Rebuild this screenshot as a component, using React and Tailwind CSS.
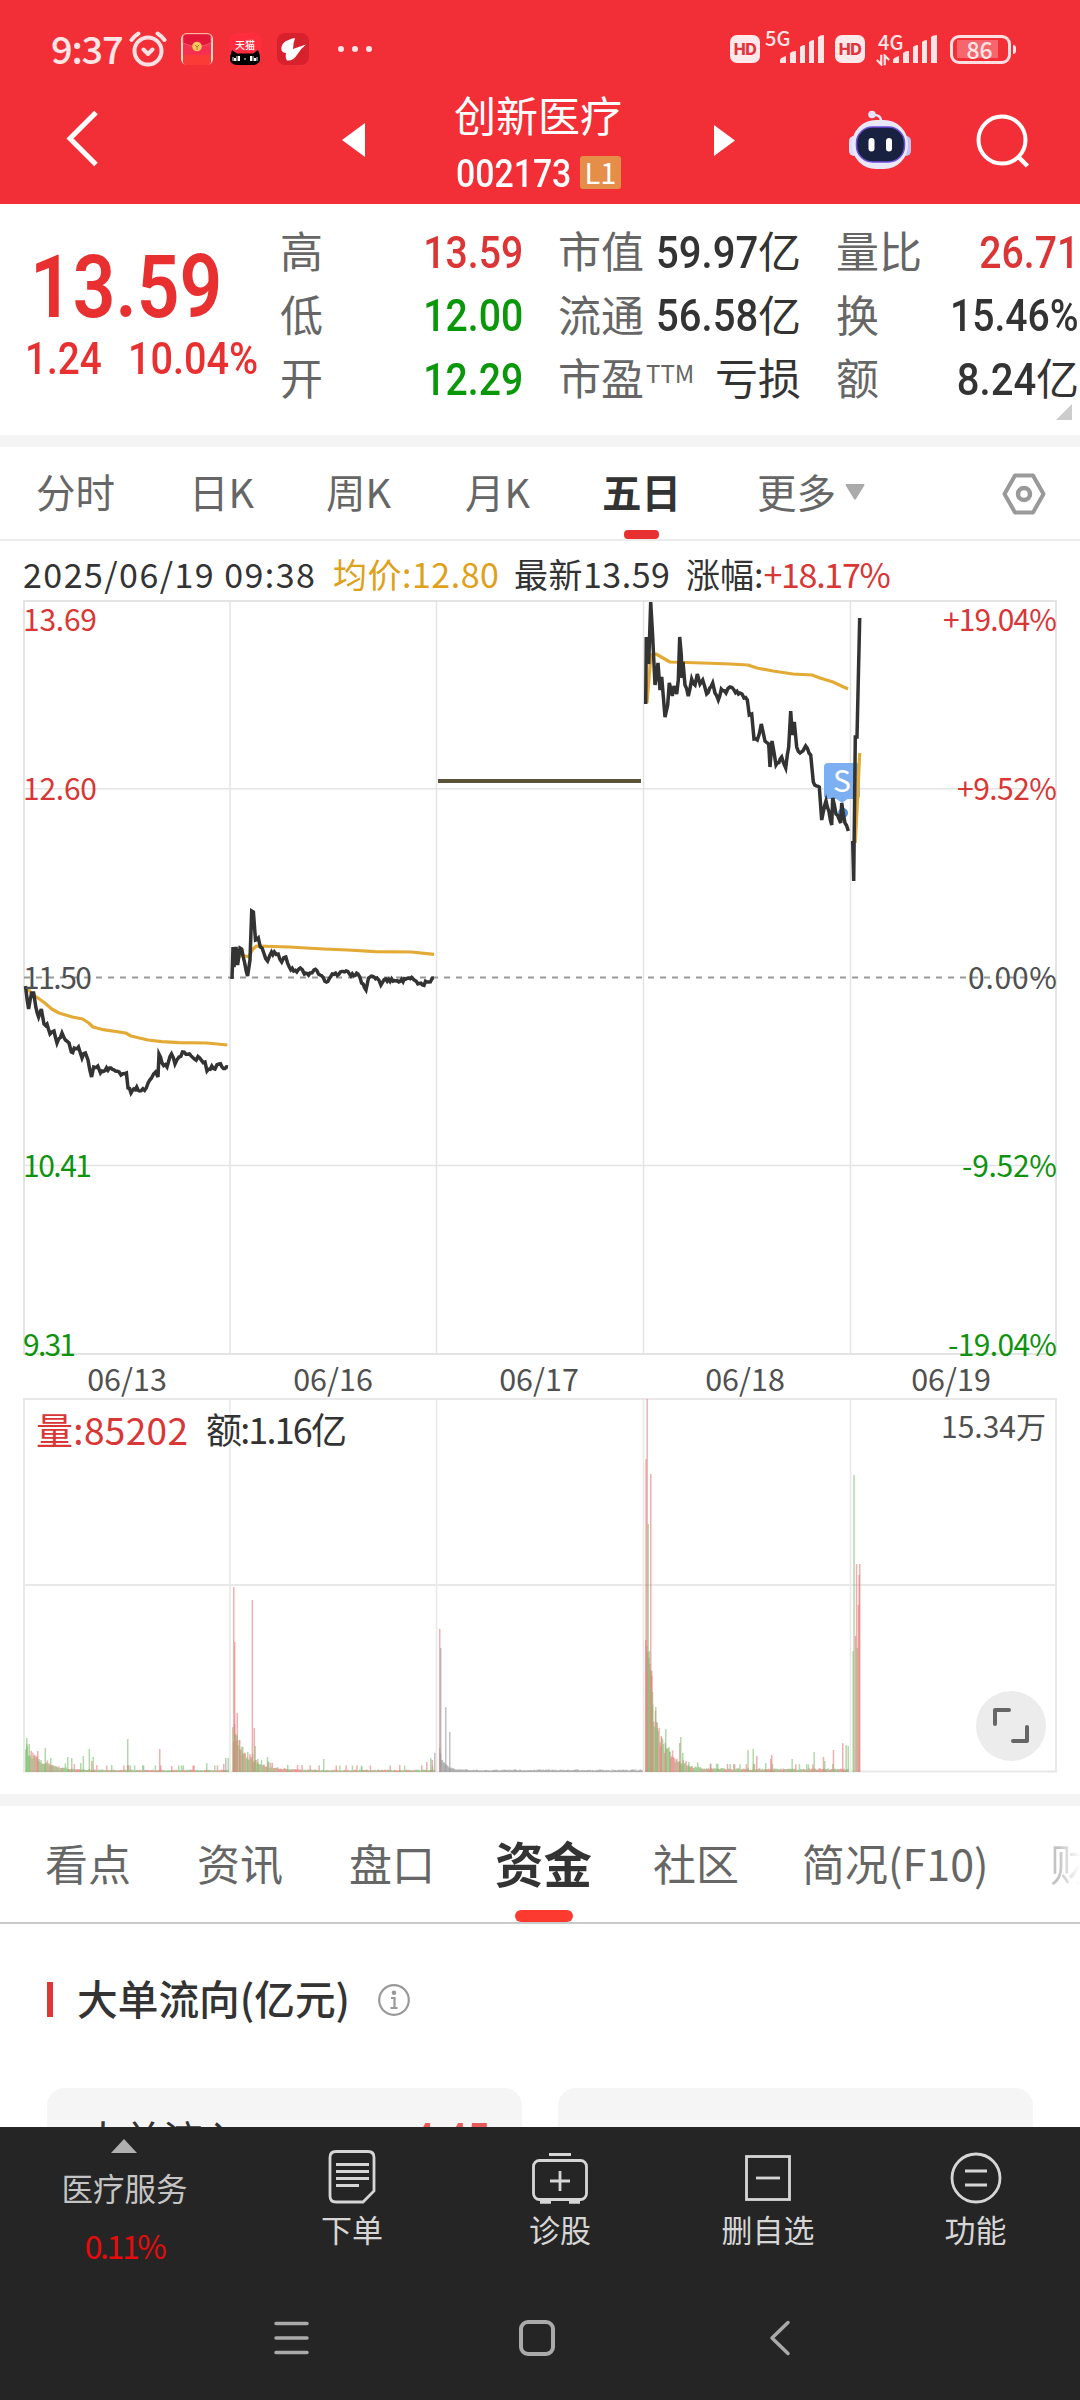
import React, { useState } from 'react';

const ROJO = '#d93636';
const VERDE = '#0f930f';

const cotizacion = [
  [
    { label: '高', value: '13.59', color: 'text-[#dc3535]' },
    { label: '低', value: '12.00', color: 'text-[#0a970a]' },
    { label: '开', value: '12.29', color: 'text-[#0a970a]' },
  ],
  [
    { label: '市值', value: '59.97', unit: '亿', color: 'text-[#333]' },
    { label: '流通', value: '56.58', unit: '亿', color: 'text-[#333]' },
    { label: '市盈', sup: 'TTM', unit: '亏损', color: 'text-[#333]' },
  ],
  [
    { label: '量比', value: '26.71', color: 'text-[#dc3535]' },
    { label: '换', value: '15.46%', color: 'text-[#333]' },
    { label: '额', value: '8.24', unit: '亿', color: 'text-[#333]' },
  ],
];

const periodos = [
  { id: '分时', cls: 'ml-[36px] w-[153px]' },
  { id: '日K', cls: 'w-[137px]' },
  { id: '周K', cls: 'w-[139px]' },
  { id: '月K', cls: 'w-[137px]' },
  { id: '五日', cls: 'w-[155px]' },
];

const secciones = [
  { id: '看点', cls: 'ml-[45px] w-[152px]' },
  { id: '资讯', cls: 'w-[152px]' },
  { id: '盘口', cls: 'w-[146px]' },
  { id: '资金', cls: 'w-[158px]' },
  { id: '社区', cls: 'w-[149px]' },
  { id: '简况(F10)', cls: 'w-[248px]' },
];

const precios = [
  '25.5,986 28.6,1009 31.7,993 33.7,993 35.8,1007 38.6,1017 41.3,1009 44,1024 47,1024 50,1034 54,1031 57,1043 62,1033 65.4,1040 69,1043 71.3,1052 78.5,1047 82,1058 85.4,1053 88,1060 91.6,1077 93.7,1067 97.8,1066 100.5,1073 109.5,1068 115.4,1071 121,1075 126.4,1073 128,1088 131,1093 136.7,1087 139.5,1091 146.3,1088 151.5,1078 155.6,1072 158,1077 159,1054 162,1063 167,1067 171.5,1054 175,1064 179,1057 182.5,1052 189.4,1054 194.5,1059 199.7,1058 205,1062 207,1071 211.8,1066 215,1069 219,1064 222,1067 228,1067',
  '232,979 233,947 234,967 236,947 237.6,965 240,948 241.7,949 244.5,962 247.6,976 250,960 251.7,911 253.4,912 255.5,940 258.3,938 260.3,947 263.8,953 267.6,961 270,955 274.4,952 278.2,954 281.7,962 285.8,957 289.3,967 293.7,971 296.8,972 300.3,968 304.4,974 310,973 314,970 320,975 326.4,982 332.3,974 339,974 346,971 349.5,974 358,974 361.6,983 366,990 368.5,978 377,978 380.9,985 385.7,979 396,981 413,979 422.5,985 427,982 433.9,978',
  '645.7,704 646.3,637 648.7,664 650.7,602 652.7,637 655,685 658,663 660,690 661.7,677 665,717 667.7,705 669.3,683 672.3,696 674,686 676.7,694 678.3,680 679.7,637 681.3,655 682,678 683,662 685,685 688.3,696 691.7,679 695,685 697.3,674 700,684 702.7,680 706.7,694 712.7,683 715,693 718.3,700 721.3,689 726,693 730,687 734,690 740,693 744,698 747.3,700 749.3,715 751.7,714 754,739 757.3,740 761.3,724 765,741 768.7,744 770,767 772,741 776,765 781.7,757 785.7,768 788.7,747 790.7,711 792.3,735 794.3,722 796.7,747 800,753 805.7,746 810.7,755 813.3,782 819.3,787 821.7,820 826,801 831.7,825 832.7,798 836,814 840.7,823 841.7,803 845,823 848.3,831',
];

const medias = [
  '27.5,988 31.7,994 38,998 44.8,1003 51.7,1009 59,1013 72.3,1017 82.6,1019 88.8,1023 93,1027 103.3,1029.7 125.7,1033 130.9,1036 148,1040 161.8,1041.7 179,1042.7 206.6,1043 227.3,1045',
  '232,965 241,955 248.6,956.7 253,949 256.5,946 289,947 323.7,949 347.8,950 375.3,951.7 411.5,952 434,954.3',
  '647,703 649,678 651,655 656,654 663,658 670,662 703,663 730,664 748,665 757,668 773,671 793,674 812,675 820,678 833,682 848,689',
];

// ruido determinista para las barras pequeñas
const ruido = n => {
  const s = Math.sin(n * 12.9898) * 43758.5453;
  return s - Math.floor(s);
};

// añade pequeñas oscilaciones entre puntos
const detallar = (linea, amp) => {
  const pts = linea.split(' ').map(p => p.split(',').map(Number));
  const out = [];
  pts.forEach((p, i) => {
    out.push(p);
    const q = pts[i + 1];
    if (!q) return;
    const n = Math.floor((q[0] - p[0]) / 1.4);
    for (let k = 1; k < n; k++) {
      const t = k / n;
      out.push([p[0] + (q[0] - p[0]) * t, p[1] + (q[1] - p[1]) * t + (ruido(i * 31 + k) - 0.5) * amp]);
    }
  });
  return out.map(p => p[0].toFixed(1) + ',' + p[1].toFixed(1)).join(' ');
};

const BASE = 1772;

// [inicio, fin, alto inicial, caída, alto mínimo, tipo]
const tramos = [
  [25, 228, 25, 16, 2, 'mix'],
  [232, 434, 42, 15, 2, 'mix'],
  [439, 642, 22, 5, 2, 'gris'],
  [652, 848, 62, 13, 3, 'mix'],
];

const picos = [
  [26, 1738, 'g'], [28.5, 1744, 'g'], [37, 1751, 'r'], [44.5, 1748, 'g'], [50, 1758, 'g'], [67, 1757, 'g'], [71, 1758, 'g'],
  [80, 1763, 'g'], [82.6, 1756, 'g'], [88.6, 1749, 'g'], [91, 1761, 'r'], [92.5, 1757, 'g'], [111, 1765, 'g'], [127, 1739, 'g'], [159, 1749, 'r'],
  [171, 1766, 'r'], [206, 1763, 'g'], [223, 1764, 'r'], [225, 1758, 'n'], [227.5, 1758, 'g'],
  [233, 1587, 'r'], [234, 1642, 'r'], [235, 1735, 'g'], [236.5, 1713, 'r'], [239, 1740, 'r'], [242, 1747, 'g'], [247, 1752, 'g'], [251.6, 1600, 'r'],
  [253.5, 1728, 'r'], [254.5, 1746, 'g'], [257, 1759, 'g'], [266.7, 1757, 'g'], [287, 1765, 'g'], [323, 1759, 'g'], [361, 1767, 'g'],
  [399, 1765, 'r'], [426, 1762, 'r'], [430, 1758, 'g'], [431.5, 1760, 'r'], [434, 1753, 'n'],
  [439, 1629, 'r'], [440, 1648, 'n'], [445, 1707, 'n'], [449, 1732, 'n'],
  [645.3, 1459, 'r'], [646.4, 1399, 'r'], [647.5, 1524, 'g'], [648.6, 1651, 'g'], [650, 1474, 'r'], [651, 1671, 'r'], [651.8, 1692, 'g'],
  [655, 1707, 'g'], [656.4, 1728, 'g'], [660.5, 1736, 'r'], [665, 1729, 'g'], [669, 1752, 'g'], [679, 1743, 'r'], [680, 1737, 'g'], [682, 1753, 'g'],
  [688, 1762, 'g'], [710, 1764, 'r'], [717, 1764, 'g'], [747.3, 1750, 'g'], [752.5, 1749, 'g'], [756, 1756, 'r'], [765, 1763, 'g'],
  [770, 1759, 'r'], [771, 1755, 'r'], [791.4, 1759, 'g'], [813.4, 1752, 'g'], [822.7, 1757, 'r'], [824, 1761, 'g'], [832.7, 1750, 'r'], [842, 1743, 'r'],
  [845.4, 1745, 'g'], [847.5, 1746, 'g'],
  [852.4, 1651, 'g'], [853.3, 1475, 'g'], [854.7, 1636, 'r'], [855.8, 1564, 'r'], [856.6, 1648, 'g'], [857.6, 1605, 'r'], [858.4, 1575, 'r'], [859, 1564, 'r'],
];

const colorBarra = { r: '#e8797a', g: '#7fbf72', n: '#999999' };

function barrasVolumen() {
  const barras = [];
  tramos.forEach(([x0, x1, alto, caida, min, tipo]) => {
    for (let x = x0; x < x1; x += 0.9) {
      const r = ruido(x * 3.1);
      const extra = r > 0.9 && tipo === 'mix' ? 4 : 0;
      const h = alto * Math.exp(-(x - x0) / caida) * (0.65 + 0.5 * ruido(x)) + min * (0.6 + r * 0.7) + extra;
      const c = tipo === 'gris' ? 'n' : ruido(x * 7.7) > 0.45 ? 'g' : 'r';
      barras.push([x, BASE - h, c]);
    }
  });
  // bloque sólido al abrir 06/18
  for (let x = 645; x < 652; x += 1) barras.push([x, 1640 + (x - 645) * 6, x % 2 ? 'r' : 'g']);
  return barras.concat(picos);
}

const barras = barrasVolumen();

const ejes = [
  { y: 620, izq: '13.69', der: '+19.04%', color: ROJO, wi: 74, wd: 114 },
  { y: 789, izq: '12.60', der: '+9.52%', color: ROJO, wi: 74, wd: 100 },
  { y: 977.5, izq: '11.50', der: '0.00%', color: '#505050', wi: 69, wd: 89 },
  { y: 1165.5, izq: '10.41', der: '-9.52%', color: VERDE, wi: 69, wd: 95 },
  { y: 1345, izq: '9.31', der: '-19.04%', color: VERDE, wi: 53, wd: 109 },
];

function Num({ children, className = '' }) {
  return (
    <span className={`inline-block font-['Roboto',sans-serif] font-medium whitespace-nowrap ${className}`}>{children}</span>
  );
}

function Senal() {
  return (
    <svg className="w-[45px] h-[30px]" viewBox="0 0 45 30" fill="#ffe5e6">
      <path d="M0 29v-3q0-2 6-4v7z" />
      <path d="M10 29V19q2-2 6-2v12z" />
      <path d="M20 29V13q2-2 5-2v18z" />
      <path d="M29 29V8q2-2 5-2v23z" />
      <path d="M38 29V3q2-2 6-2v28z" />
    </svg>
  );
}

function HD({ className }) {
  return (
    <span className={`flex h-[28px] w-[30px] items-center justify-center rounded-[7px] bg-[#ffe9ea] font-['Inter',sans-serif] text-[16px] font-extrabold tracking-[-0.5px] text-[#e2343c] ${className}`}>
      HD
    </span>
  );
}

function BarraEstado() {
  return (
    <div className="flex h-[96px] items-center pt-[2px] text-[#ffe5e6]">
      <span className="ml-[51px] w-[78px] whitespace-nowrap pb-[2px] text-[38px] font-medium tracking-[-1.2px] leading-none">9:37</span>
      <svg className="h-[36px] w-[38px]" viewBox="0 0 38 36" fill="none" stroke="#ffe0e2" strokeWidth="4" strokeLinecap="round" strokeLinejoin="round">
        <circle cx="19" cy="20" r="13.5" />
        <path d="M2.5 9q3-4 7-6.500M35.500 9q-3-4-7-6.500M14.500 18.500l4.500 4.500 4.500-4.500" />
      </svg>
      <svg className="ml-[14px] h-[32px] w-[32px]" viewBox="0 0 32 32">
        <rect width="32" height="32" rx="6" fill="#f7d9c4" />
        <rect x="2" y="1.500" width="28" height="30.500" rx="4" fill="#f5314f" />
        <path d="M2 22h28v6q0 4-4 4H6q-4 0-4-4z" fill="#fb3b35" />
        <path d="M2 4q0-3 4-3h20q4 0 4 3v6q-14 7-28 0z" fill="#e3173a" stroke="#ff6c72" strokeWidth="0.7" />
        <circle cx="16" cy="13.500" r="4.800" fill="#f6c560" />
        <path d="M14 12l2 2 2-2M16 14v3" stroke="#b97818" fill="none" />
      </svg>
      <span className="relative ml-[16px] flex h-[32px] w-[32px] justify-center overflow-hidden rounded-[8px] bg-[#ff2d3e]">
        <span className="mt-[5px] text-[10px] font-medium leading-[13px] text-white">天猫</span>
        <svg className="absolute bottom-0 left-0 h-[15px] w-[32px]" viewBox="0 0 32 15">
          <path d="M1 15V7Q2 3 3 0l5 3.500h16L29 0q2 4 2 7v8z" fill="#000" />
          <path d="M6 11V8M10 11V6M22 11V6M26 11V8" stroke="#fff" strokeWidth="2" />
          <path d="M4 11V7M8 6v5M24 6v5M28 7v4M15 9h2" stroke="#fff" strokeWidth="0.900" />
        </svg>
      </span>
      <svg className="ml-[16px] h-[32px] w-[32px]" viewBox="0 0 32 32">
        <rect width="32" height="32" rx="8" fill="#d7222e" />
        <path d="M18 5Q3 8 4.500 17q1 3 4.500 3-1 5 1 7.500 6 1 11-7 3-5 8-9-6 2-13 4.500 0-6 2-10.500z" fill="#fff" />
      </svg>
      <span className="ml-[29px] flex gap-[8px]">
        <i className="h-[6px] w-[6px] rounded-full bg-[#ffe5e6]" />
        <i className="h-[6px] w-[6px] rounded-full bg-[#ffe5e6]" />
        <i className="h-[6px] w-[6px] rounded-full bg-[#ffe5e6]" />
      </span>
      <HD className="ml-auto" />
      <span className="-mr-[12px] ml-[5px] mb-[22px] w-[27px] text-[20px] font-medium leading-none">5G</span>
      <Senal />
      <HD className="ml-[10px]" />
      <span className="ml-[11px] flex w-[27px] flex-col">
        <span className="ml-[2px] text-[20px] font-medium leading-[19px]">4G</span>
        <svg className="mt-[3px] h-[12px] w-[14px]" viewBox="0 0 16 12" fill="none" stroke="#ffe5e6" strokeWidth="2.500">
          <path d="M6 0v11L1 6M10 12V1l5 5" />
        </svg>
      </span>
      <span className="-ml-[10px]">
        <Senal />
      </span>
      <span className="ml-[12px] flex h-[29px] w-[61px] items-center rounded-[9px] border-[3px] border-[#ffe0e2] pl-[4px]">
        <span className="flex h-[18px] w-[41px] items-center justify-center bg-[#f7666c] pl-[4px] text-[23px] font-medium leading-none">86</span>
      </span>
      <i className="ml-[2px] mr-[64px] h-[9px] w-[3px] rounded-r bg-[#ffe5e6]" />
    </div>
  );
}

function Cabecera() {
  return (
    <div className="flex h-[108px] items-start text-white">
      <svg className="ml-[62px] mt-[12px] h-[60px] w-[42px]" viewBox="0 0 42 60" fill="none" stroke="#fff" strokeWidth="5">
        <path d="M34 4.500L8 30.500l26 26" />
      </svg>
      <svg className="ml-[238px] mt-[27px] h-[34px] w-[23px]" viewBox="0 0 23 34">
        <path d="M0 17L23 0v34z" fill="#fff" />
      </svg>
      <div className="ml-[78px] flex w-[190px] flex-col items-center">
        <div className="whitespace-nowrap text-[42px] leading-[36px]">创新医疗</div>
        <div className="mt-[24px] flex h-[33px] w-full items-center pl-[13px]">
          <Num className="w-[124px] origin-left scale-x-[0.89] pt-[2px] text-[38px] leading-none">002173</Num>
          <span className="flex h-[33px] w-[41px] shrink-0 items-center justify-center rounded-[3px] bg-[#e48e49] pb-[2px] text-[29px] leading-none">L1</span>
        </div>
      </div>
      <svg className="ml-[81px] mt-[29px] h-[31px] w-[21px]" viewBox="0 0 21 31">
        <path d="M21 15.500L0 0v31z" fill="#fff" />
      </svg>
      <svg className="ml-[113px] mt-[14px] h-[60px] w-[64px]" viewBox="0 0 64 60">
        <path d="M23 5q10-1 10 6" stroke="#e8e4fb" strokeWidth="2.500" fill="none" />
        <circle cx="24" cy="4.500" r="3.800" fill="#e6e3fa" />
        <rect x="1" y="26" width="10" height="20" rx="5" fill="#dcdcf8" />
        <rect x="53" y="26" width="10" height="20" rx="5" fill="#c3c0ee" />
        <rect x="4" y="10" width="56" height="49" rx="24" fill="#e9e8fb" />
        <rect x="8.500" y="17" width="48" height="35" rx="16" fill="#18213f" stroke="#6d4fd8" strokeWidth="1.500" />
        <rect x="20.500" y="28" width="6" height="13.500" rx="3" fill="#fff" />
        <rect x="38" y="28" width="6" height="13.500" rx="3" fill="#fff" />
      </svg>
      <svg className="ml-[63px] mt-[16px] h-[58px] w-[58px]" viewBox="0 0 58 58" fill="none" stroke="#fff" strokeWidth="4">
        <circle cx="27" cy="28" r="23.500" />
        <path d="M43 44.500l9.500 9.500" strokeWidth="4.500" />
      </svg>
    </div>
  );
}

function Cotizacion() {
  return (
    <div className="relative flex h-[231px]">
      <div className="w-[280px] pt-[40px] text-[#e83030]">
        <Num className="ml-[30px] origin-left scale-x-[0.86] text-[87px] font-semibold leading-[86px]">13.59</Num>
        <div className="flex h-[60px] w-[280px] items-center">
          <Num className="ml-[25px] w-[103px] origin-left scale-x-[0.89] text-[43.500px] leading-none">1.24</Num>
          <Num className="origin-left scale-x-[0.91] text-[43.500px] leading-none">10.04%</Num>
        </div>
      </div>
      {cotizacion.map((col, i) => (
        <div key={i} className={i === 0 ? 'w-[243px] pt-[14px]' : 'ml-[35px] w-[243px] shrink-0 pt-[14px]'}>
          {col.map(c => (
            <div key={c.label} className="flex h-[63.500px] items-center justify-between whitespace-nowrap text-[43px] leading-none">
              <span className="flex items-start text-[#666]">
                {c.label}
                {c.sup && <span className="ml-[2px] text-[24px] leading-[36px]">{c.sup}</span>}
              </span>
              <span className={`flex items-center ${c.color}`}>
                {c.value && <Num className={c.unit ? 'origin-right scale-x-[0.91] pt-[6px] text-[44px]' : 'origin-right scale-x-[0.89] pt-[6px] text-[44px]'}>{c.value}</Num>}
                {c.unit && <span>{c.unit}</span>}
              </span>
            </div>
          ))}
        </div>
      ))}
      <svg className="absolute bottom-[15px] right-[8px] h-[16px] w-[16px]" viewBox="0 0 16 16">
        <path d="M16 0v16H0z" fill="#ccc" />
      </svg>
    </div>
  );
}

function Periodos() {
  const [activo, setActivo] = useState('五日');
  return (
    <div className="flex h-[94px] border-b-2 border-[#ebebeb] text-[39.500px] text-[#666]">
      {periodos.map(p => (
        <button
          key={p.id}
          type="button"
          onClick={() => setActivo(p.id)}
          className={`relative flex h-[92px] items-center whitespace-nowrap pb-[5px] text-left leading-none ${p.cls} ${activo === p.id ? 'font-bold text-[#333]' : ''}`}
        >
          {p.id}
          {activo === p.id && <i className="absolute bottom-0 left-[22px] h-[9px] w-[35px] rounded-[4px] bg-[#e93030]" />}
        </button>
      ))}
      <div className="flex items-center pb-[5px] leading-none">
        更多
        <svg className="ml-[9px] mt-[2px] h-[16px] w-[20px]" viewBox="0 0 20 16">
          <path d="M1 0h18q1 1 0 2l-8 13q-1 1-2 0L1 2q-1-1 0-2z" fill="#aaa" />
        </svg>
      </div>
      <svg className="ml-auto mr-[34px] mt-[25px] h-[44px] w-[44px]" viewBox="0 0 44 44" fill="none" stroke="#999" strokeWidth="4" strokeLinejoin="round">
        <path d="M13 3.500h18L41.500 22 31 40.500H13L2.500 22z" />
        <circle cx="22" cy="22" r="6" strokeWidth="4.500" />
      </svg>
    </div>
  );
}

function Etiqueta({ x, y, size = 30, ancho, fin, color, children }) {
  return (
    <text
      x={x}
      y={y + size * 0.367}
      fontSize={size}
      fill={color}
      textAnchor={fin ? 'end' : 'start'}
      textLength={ancho}
    >
      {children}
    </text>
  );
}

function GraficoPrecio() {
  return (
    <svg className="block h-[758px] w-[1080px] overflow-visible" viewBox="0 599 1080 758">
      <g stroke="#e4e4e4" strokeWidth="2" fill="none">
        <path d="M24 601H1056V1354H24z" />
        <path d="M24 788.700H1056M24 1165.500H1056" strokeWidth="1.500" />
        <path d="M230 601V1354M436.500 601V1354M643.500 601V1354M850.500 601V1354" strokeWidth="1.500" />
      </g>
      <path d="M24 977.500H1056" stroke="#999" strokeWidth="2" strokeDasharray="6 6" />
      <g fill="#7cb0f2">
        <rect x="824" y="763" width="36" height="36" rx="4" />
        <path d="M835 798l7 5 7-5z" />
        <circle cx="843" cy="813" r="5" fill="#4f8fe0" />
      </g>
      <text x="842" y="792" fontSize="30" fill="#fff" textAnchor="middle">S</text>
      <g fill="none" stroke="#e3aa35" strokeWidth="3.200" strokeLinejoin="round">
        {medias.map(m => <polyline key={m} points={m} />)}
        <polyline points="855.300,843 857.500,800 859.700,753" />
      </g>
      <g fill="none" stroke="#333" strokeWidth="3.500">
        {precios.map(p => <polyline key={p} points={detallar(p, 4)} />)}
        <polyline points="852.700,841 853.700,881 855.300,737 857,737 859.700,618" />
      </g>
      <path d="M438 781H641" stroke="#5b5136" strokeWidth="4" />
      {ejes.map(e => (
        <g key={e.izq}>
          <Etiqueta x={23} y={e.y} ancho={e.wi} color={e.color}>{e.izq}</Etiqueta>
          <Etiqueta x={1057} y={e.y} ancho={e.wd} color={e.color} fin>{e.der}</Etiqueta>
        </g>
      ))}
    </svg>
  );
}

function GraficoVolumen() {
  return (
    <div className="relative h-[376px]">
      <svg className="block h-[376px] w-[1080px] overflow-visible" viewBox="0 1398 1080 376">
        <g stroke="#e8e8e8" strokeWidth="2" fill="none">
          <path d="M24 1399H1056V1771.500H24zM24 1585H1056" />
          <path d="M230 1399V1771M436.500 1399V1771M643.500 1399V1771M850.500 1399V1771" strokeWidth="1.500" />
        </g>
        {barras.map(([x, y, c], i) => (
          <rect key={i} x={x} y={y} width="1.500" height={BASE - y} fill={colorBarra[c]} fillOpacity="0.600" />
        ))}
        <Etiqueta x={36} y={1431} size={37} ancho={152} color={ROJO}>量:85202</Etiqueta>
        <Etiqueta x={206} y={1431} size={36} ancho={141} color="#333">额:1.16亿</Etiqueta>
        <Etiqueta x={1046} y={1427} ancho={105} color="#505050" fin>15.34万</Etiqueta>
      </svg>
      <button type="button" className="absolute bottom-[13px] right-[34px] flex h-[70px] w-[70px] items-center justify-center rounded-full bg-[#ececec]">
        <svg className="h-[38px] w-[38px]" viewBox="0 0 38 38" fill="none" stroke="#666" strokeWidth="4" strokeLinecap="round" strokeLinejoin="round">
          <path d="M3 17V3h14M35 20v14H21" />
        </svg>
      </button>
    </div>
  );
}

function Secciones() {
  const [activa, setActiva] = useState('资金');
  return (
    <div className="flex h-[118px] overflow-hidden border-b-2 border-[#c9c9c9] text-[43px] text-[#666]">
      {secciones.map(s => (
        <button
          key={s.id}
          type="button"
          onClick={() => setActiva(s.id)}
          className={`relative flex h-[116px] shrink-0 items-center whitespace-nowrap pb-[4px] text-left leading-none ${s.cls} ${activa === s.id ? 'text-[48.500px] font-bold text-[#333]' : ''}`}
        >
          {s.id}
          {activa === s.id && <i className="absolute bottom-0 left-[20px] h-[12px] w-[58px] rounded-[6px] bg-[#fc3a30]" />}
        </button>
      ))}
      <span className="flex shrink-0 items-center bg-linear-to-r from-[#c4c4c4] from-20% to-white to-70% bg-clip-text pb-[4px] leading-none text-transparent">财</span>
    </div>
  );
}

function Fondos() {
  return (
    <div className="h-[203px] overflow-hidden">
      <div className="mt-[56px] flex h-[38px] items-center">
        <i className="ml-[47px] h-[35px] w-[6px] bg-[#dc3636]" />
        <span className="ml-[24px] w-[300px] whitespace-nowrap pb-[2px] text-[40.700px] font-medium leading-none text-[#333]">大单流向(亿元)</span>
        <svg className="mt-[2px] h-[34px] w-[34px]" viewBox="0 0 34 34" fill="none" stroke="#999" strokeWidth="2.200">
          <circle cx="17" cy="17" r="14.800" />
          <circle cx="17" cy="9.800" r="2.300" fill="#999" stroke="none" />
          <path d="M14 15h3.500v10M13.500 25h7" />
        </svg>
      </div>
      <div className="mt-[70px] grid grid-cols-2 gap-[36px] px-[47px]">
        <div className="flex h-[130px] items-start justify-between rounded-[18px] bg-[#f5f5f5] pl-[36px] pr-[33px] pt-[30px] text-[40px] leading-none text-[#333]">
          大单流入
          <Num className="origin-right scale-x-[0.880] text-[44px] font-bold leading-[44px] text-[#e85b5b]">4.45</Num>
        </div>
        <div className="h-[130px] rounded-[18px] bg-[#f5f5f5]" />
      </div>
    </div>
  );
}

function Accion({ texto, className, children }) {
  return (
    <button type="button" className={`flex flex-col items-center pt-[20px] text-[31px] leading-[34px] text-[#d6d6d6] ${className}`}>
      <svg className="h-[60px] w-[60px]" viewBox="0 0 60 60" fill="none" stroke="#d6d6d6" strokeWidth="2.800">
        {children}
      </svg>
      <span className="mt-[5px] whitespace-nowrap">{texto}</span>
    </button>
  );
}

function BarraInferior() {
  return (
    <div className="h-[273px] bg-[#252525]">
      <div className="flex h-[153px]">
        <div className="flex w-[249px] flex-col items-center pt-[12px] text-[31.500px] text-[#c4c4c4]">
          <svg className="-ml-[1px] h-[14px] w-[26px]" viewBox="0 0 26 14">
            <path d="M13 0l13 14H0z" fill="#b0b0b0" />
          </svg>
          <span className="mt-[16px] leading-[36px]">医疗服务</span>
          <span className="mt-[22px] text-[32px] leading-[36px] tracking-[-2.400px] text-[#e60c0c]">0.11%</span>
        </div>
        <Accion texto="下单" className="w-[206px]">
          <path d="M14 4.500h32q6 0 6 6V44L41 55H14q-6 0-6-6V10.500q0-6 6-6z" />
          <path d="M14 17.500h33M14 24.500h33M14 31.500h33M14 38.500h23" />
        </Accion>
        <Accion texto="诊股" className="w-[210px]">
          <rect x="3.500" y="13.500" width="53" height="39" rx="6" />
          <path d="M19 7.500h22M30 24v20M20 34h20" />
          <path d="M10 55h11M39 55h11" strokeWidth="3.500" />
        </Accion>
        <Accion texto="删自选" className="w-[206px]">
          <rect x="8.500" y="9.500" width="43" height="43" />
          <path d="M18 31h24" />
        </Accion>
        <Accion texto="功能" className="w-[209px]">
          <circle cx="30" cy="31" r="24" />
          <path d="M19 24h22M19 38h22" />
        </Accion>
      </div>
      <div className="flex items-center pt-[39px]">
        <svg className="ml-[273px] h-[38px] w-[37px]" viewBox="0 0 37 38" stroke="#aaa" strokeWidth="3.500" strokeLinecap="round">
          <path d="M3 4.500h31M3 19h31M3 33.500h31" />
        </svg>
        <i className="ml-[209px] h-[36px] w-[36px] rounded-[9px] border-4 border-[#aaa]" />
        <svg className="ml-[213px] h-[38px] w-[24px]" viewBox="0 0 24 38" fill="none" stroke="#aaa" strokeWidth="3.500" strokeLinecap="round" strokeLinejoin="round">
          <path d="M20 3.500L4 19l16 15.500" />
        </svg>
      </div>
    </div>
  );
}

export default function App() {
  return (
    <div className="h-[2400px] w-[1080px] overflow-hidden bg-white font-['Noto_Sans_CJK_SC',sans-serif]">
      <header className="h-[204px] bg-[#f22f37]">
        <BarraEstado />
        <Cabecera />
      </header>
      <Cotizacion />
      <div className="h-[12px] bg-[#f4f4f4]" />
      <Periodos />
      <div className="flex h-[58px] items-center whitespace-nowrap pt-[7px] text-[34px] leading-none text-[#333]">
        <span className="ml-[23px] w-[310px] tracking-[1.450px]">2025/06/19 09:38</span>
        <span className="w-[181px] tracking-[0.500px] text-[#e0a01a]">均价:12.80</span>
        <span className="w-[172px] tracking-[0.500px]">最新13.59</span>
        <span>涨幅:</span>
        <span className="tracking-[-1.300px] text-[#d93636]">+18.17%</span>
      </div>
      <GraficoPrecio />
      <div className="flex h-[41px] items-center pl-[24px] text-[30.500px] leading-[26px] text-[#505050]">
        {['06/13', '06/16', '06/17', '06/18', '06/19'].map(f => (
          <span key={f} className="w-[206px] text-center">{f}</span>
        ))}
      </div>
      <GraficoVolumen />
      <div className="h-[20px]" />
      <div className="h-[12px] bg-[#f4f4f4]" />
      <Secciones />
      <Fondos />
      <BarraInferior />
    </div>
  );
}
